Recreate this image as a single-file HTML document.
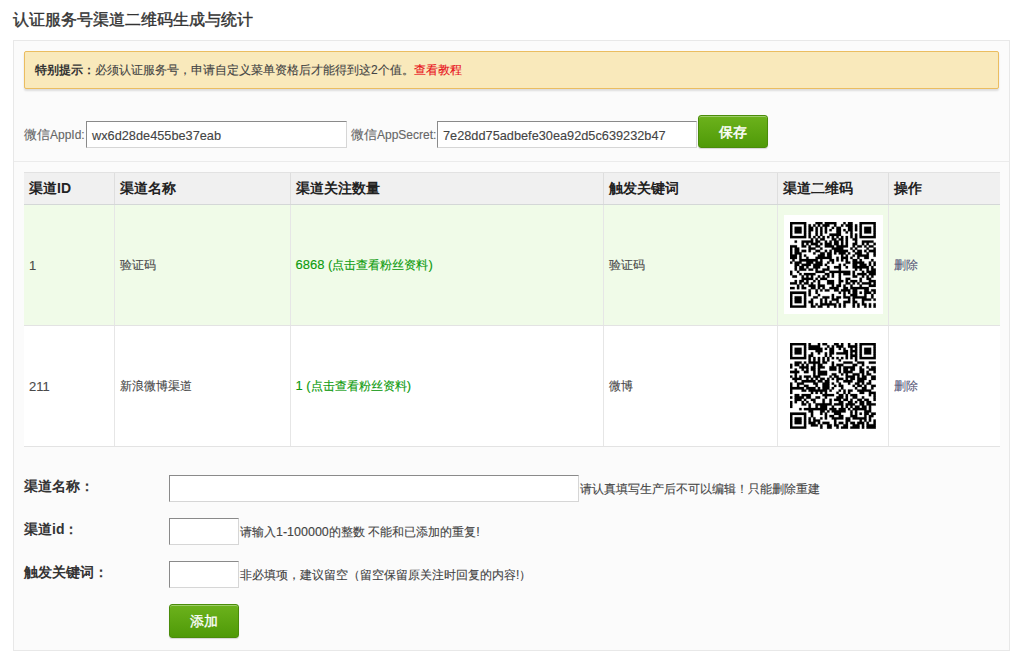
<!DOCTYPE html>
<html><head><meta charset="utf-8">
<style>
*{box-sizing:border-box;margin:0;padding:0}
html,body{width:1022px;height:662px;overflow:hidden;background:#fff}
body{font-family:"Liberation Sans",sans-serif;color:#444;position:relative;font-size:12px;-webkit-text-stroke-width:0.12px}
.abs{position:absolute;white-space:nowrap}
#title{left:13px;top:10px;font-size:16px;line-height:20px;color:#333;-webkit-text-stroke:0.4px #333}
#box{left:13px;top:40px;width:997px;height:611px;background:#fbfbfb;border:1px solid #e8e8e8}
#alert{left:24px;top:51px;width:975px;height:38px;background:#f9e9bb;border:1px solid #ebbd60;border-radius:2px;box-shadow:0 2px 2px rgba(0,0,0,.12);font-size:12px;line-height:36px;padding-left:10px;color:#444}
#alert b{color:#333;-webkit-text-stroke-width:0}
#alert .red{color:#e8101a}
.lbl{font-size:13px;color:#666;line-height:16px}
.lat{font-size:12px}
.inp{background:#fff;border:1px solid;border-color:#8a8a8a #d6d6d6 #d6d6d6 #8a8a8a;font-size:12.75px;color:#444;line-height:27px;padding-left:5px}
.btn{background:linear-gradient(#6cb21c,#4f9a08);border:1px solid #4a8c0a;border-radius:3px;color:#fff;font-size:14px;text-align:center;box-shadow:inset 0 1px 0 rgba(255,255,255,.35),0 1px 1px rgba(0,0,0,.15)}
#sep{left:14px;top:161px;width:995px;height:1px;background:#ebebeb}
table{position:absolute;left:24px;top:172px;width:976px;border-collapse:collapse;font-size:12px}
th{-webkit-text-stroke-width:0;height:32px;background:#f0f0f0;text-align:left;font-size:14px;color:#222;border-top:1px solid #e2e2e2;border-bottom:1px solid #d4d7d7;padding-left:5px}
td{padding-left:5px;color:#4a4a4a;border-left:1px solid #e6e6e6;border-bottom:1px solid #e3e3e3}
th{border-left:1px solid #dedede}
th:first-child,td:first-child{border-left:none}
tr.g td{background:#f0fbe8}
tr.w td{background:#fff}
.grn{color:#0c9a0c}
.n{font-size:13px}
.hl{font-size:12.5px}
.del{color:#58587a}
.qr{display:block;width:99px;height:99px}
.qs{position:absolute;fill:#000;stroke:#000;stroke-width:0.1}
.flab{font-size:14px;font-weight:bold;color:#333;line-height:16px;-webkit-text-stroke-width:0}
.hint{font-size:12px;color:#444;line-height:16px}
</style></head><body>
<div class="abs" id="title">认证服务号渠道二维码生成与统计</div>
<div class="abs" id="box"></div>
<div class="abs" id="alert"><b>特别提示：</b>必须认证服务号，申请自定义菜单资格后才能得到这2个值。<span class="red">查看教程</span></div>
<div class="abs lbl" style="left:24px;top:127px">微信<span class="lat">AppId:</span></div>
<div class="abs inp" style="left:86px;top:121px;width:261px;height:27px">wx6d28de455be37eab</div>
<div class="abs lbl" style="left:351px;top:127px">微信<span class="lat">AppSecret:</span></div>
<div class="abs inp" style="left:437px;top:121px;width:260px;height:27px">7e28dd75adbefe30ea92d5c639232b47</div>
<div class="abs btn" style="left:698px;top:115px;width:70px;height:33px;line-height:33px;-webkit-text-stroke:0.5px #fff">保存</div>
<div class="abs" id="sep"></div>
<table>
<tr><th style="width:90px">渠道ID</th><th style="width:176px">渠道名称</th><th style="width:313px">渠道关注数量</th><th style="width:174px">触发关键词</th><th style="width:111px">渠道二维码</th><th>操作</th></tr>
<tr class="g" style="height:121px"><td class="n">1</td><td>验证码</td><td class="grn"><span class="n">6868 (</span>点击查看粉丝资料<span class="n">)</span></td><td>验证码</td><td style="padding-left:6px"><div class="qr" id="qr1"></div></td><td class="del">删除</td></tr>
<tr class="w" style="height:121px"><td class="n">211</td><td>新浪微博渠道</td><td class="grn"><span class="n">1 (</span>点击查看粉丝资料<span class="n">)</span></td><td>微博</td><td style="padding-left:6px"><div class="qr" id="qr2"></div></td><td class="del">删除</td></tr>
</table>
<div class="abs" style="left:784px;top:215px;width:99px;height:99px;background:#fff"></div>
<svg class="qs" style="left:790px;top:222px" width="85.8" height="85.8" viewBox="0 0 37 37"><path d="M0 0h7v1h-7zM11 0h3v1h-3zM15 0h5v1h-5zM23 0h1v1h-1zM25 0h2v1h-2zM30 0h7v1h-7zM0 1h1v1h-1zM6 1h1v1h-1zM8 1h1v1h-1zM10 1h1v1h-1zM12 1h1v1h-1zM14 1h3v1h-3zM19 1h1v1h-1zM22 1h1v1h-1zM24 1h3v1h-3zM28 1h1v1h-1zM30 1h1v1h-1zM36 1h1v1h-1zM0 2h1v1h-1zM2 2h3v1h-3zM6 2h1v1h-1zM8 2h2v1h-2zM11 2h1v1h-1zM13 2h1v1h-1zM15 2h1v1h-1zM18 2h1v1h-1zM20 2h2v1h-2zM25 2h2v1h-2zM28 2h1v1h-1zM30 2h1v1h-1zM32 2h3v1h-3zM36 2h1v1h-1zM0 3h1v1h-1zM2 3h3v1h-3zM6 3h1v1h-1zM8 3h2v1h-2zM11 3h1v1h-1zM13 3h1v1h-1zM15 3h1v1h-1zM17 3h1v1h-1zM20 3h2v1h-2zM23 3h1v1h-1zM25 3h2v1h-2zM28 3h1v1h-1zM30 3h1v1h-1zM32 3h3v1h-3zM36 3h1v1h-1zM0 4h1v1h-1zM2 4h3v1h-3zM6 4h1v1h-1zM8 4h1v1h-1zM11 4h1v1h-1zM13 4h1v1h-1zM15 4h1v1h-1zM20 4h2v1h-2zM24 4h1v1h-1zM26 4h1v1h-1zM30 4h1v1h-1zM32 4h3v1h-3zM36 4h1v1h-1zM0 5h1v1h-1zM6 5h1v1h-1zM8 5h1v1h-1zM11 5h1v1h-1zM13 5h1v1h-1zM17 5h5v1h-5zM26 5h1v1h-1zM28 5h1v1h-1zM30 5h1v1h-1zM36 5h1v1h-1zM0 6h7v1h-7zM8 6h1v1h-1zM10 6h1v1h-1zM12 6h1v1h-1zM14 6h1v1h-1zM16 6h1v1h-1zM18 6h1v1h-1zM20 6h1v1h-1zM22 6h1v1h-1zM24 6h1v1h-1zM26 6h1v1h-1zM28 6h1v1h-1zM30 6h7v1h-7zM9 7h1v1h-1zM11 7h1v1h-1zM13 7h2v1h-2zM18 7h2v1h-2zM21 7h2v1h-2zM24 7h1v1h-1zM27 7h2v1h-2zM2 8h1v1h-1zM5 8h5v1h-5zM11 8h2v1h-2zM15 8h1v1h-1zM17 8h1v1h-1zM19 8h2v1h-2zM22 8h1v1h-1zM24 8h1v1h-1zM28 8h1v1h-1zM31 8h5v1h-5zM5 9h1v1h-1zM7 9h1v1h-1zM9 9h3v1h-3zM13 9h1v1h-1zM15 9h3v1h-3zM19 9h2v1h-2zM22 9h1v1h-1zM24 9h1v1h-1zM27 9h2v1h-2zM31 9h1v1h-1zM33 9h1v1h-1zM36 9h1v1h-1zM0 10h3v1h-3zM5 10h2v1h-2zM8 10h1v1h-1zM11 10h2v1h-2zM15 10h4v1h-4zM20 10h5v1h-5zM27 10h1v1h-1zM29 10h2v1h-2zM32 10h1v1h-1zM34 10h2v1h-2zM0 11h1v1h-1zM2 11h2v1h-2zM8 11h3v1h-3zM13 11h1v1h-1zM18 11h5v1h-5zM26 11h1v1h-1zM28 11h1v1h-1zM33 11h1v1h-1zM36 11h1v1h-1zM0 12h1v1h-1zM2 12h2v1h-2zM5 12h2v1h-2zM8 12h1v1h-1zM11 12h2v1h-2zM15 12h1v1h-1zM17 12h1v1h-1zM19 12h6v1h-6zM27 12h1v1h-1zM29 12h2v1h-2zM32 12h1v1h-1zM34 12h3v1h-3zM0 13h1v1h-1zM2 13h3v1h-3zM10 13h1v1h-1zM13 13h2v1h-2zM16 13h2v1h-2zM19 13h1v1h-1zM21 13h3v1h-3zM25 13h1v1h-1zM28 13h3v1h-3zM33 13h1v1h-1zM36 13h1v1h-1zM0 14h3v1h-3zM4 14h1v1h-1zM6 14h1v1h-1zM12 14h3v1h-3zM16 14h2v1h-2zM22 14h1v1h-1zM24 14h1v1h-1zM27 14h1v1h-1zM29 14h5v1h-5zM36 14h1v1h-1zM0 15h3v1h-3zM4 15h1v1h-1zM7 15h1v1h-1zM11 15h7v1h-7zM20 15h1v1h-1zM22 15h3v1h-3zM26 15h1v1h-1zM29 15h1v1h-1zM32 15h2v1h-2zM1 16h1v1h-1zM4 16h8v1h-8zM13 16h1v1h-1zM17 16h2v1h-2zM20 16h1v1h-1zM22 16h1v1h-1zM24 16h1v1h-1zM27 16h2v1h-2zM30 16h1v1h-1zM35 16h1v1h-1zM0 17h1v1h-1zM2 17h3v1h-3zM7 17h3v1h-3zM11 17h3v1h-3zM16 17h1v1h-1zM18 17h1v1h-1zM24 17h2v1h-2zM27 17h5v1h-5zM34 17h1v1h-1zM36 17h1v1h-1zM2 18h2v1h-2zM5 18h4v1h-4zM10 18h4v1h-4zM15 18h1v1h-1zM21 18h1v1h-1zM23 18h1v1h-1zM27 18h2v1h-2zM30 18h3v1h-3zM34 18h1v1h-1zM36 18h1v1h-1zM2 19h1v1h-1zM4 19h2v1h-2zM7 19h1v1h-1zM10 19h3v1h-3zM16 19h1v1h-1zM19 19h3v1h-3zM24 19h1v1h-1zM27 19h7v1h-7zM35 19h1v1h-1zM2 20h1v1h-1zM4 20h3v1h-3zM8 20h2v1h-2zM11 20h1v1h-1zM14 20h3v1h-3zM21 20h1v1h-1zM28 20h1v1h-1zM30 20h1v1h-1zM33 20h1v1h-1zM35 20h2v1h-2zM0 21h1v1h-1zM3 21h1v1h-1zM11 21h4v1h-4zM17 21h9v1h-9zM27 21h1v1h-1zM31 21h1v1h-1zM33 21h4v1h-4zM0 22h1v1h-1zM4 22h1v1h-1zM6 22h5v1h-5zM15 22h2v1h-2zM18 22h1v1h-1zM21 22h1v1h-1zM23 22h3v1h-3zM27 22h1v1h-1zM29 22h4v1h-4zM34 22h3v1h-3zM1 23h2v1h-2zM5 23h1v1h-1zM7 23h1v1h-1zM9 23h1v1h-1zM12 23h1v1h-1zM14 23h1v1h-1zM16 23h1v1h-1zM18 23h1v1h-1zM21 23h1v1h-1zM27 23h2v1h-2zM31 23h1v1h-1zM33 23h1v1h-1zM35 23h1v1h-1zM5 24h5v1h-5zM11 24h1v1h-1zM13 24h3v1h-3zM21 24h1v1h-1zM24 24h2v1h-2zM30 24h1v1h-1zM33 24h2v1h-2zM2 25h1v1h-1zM4 25h2v1h-2zM7 25h1v1h-1zM10 25h1v1h-1zM12 25h1v1h-1zM16 25h3v1h-3zM21 25h2v1h-2zM24 25h1v1h-1zM26 25h3v1h-3zM30 25h1v1h-1zM34 25h3v1h-3zM0 26h3v1h-3zM4 26h1v1h-1zM6 26h2v1h-2zM9 26h1v1h-1zM12 26h1v1h-1zM16 26h3v1h-3zM21 26h1v1h-1zM24 26h2v1h-2zM27 26h1v1h-1zM29 26h1v1h-1zM31 26h4v1h-4zM36 26h1v1h-1zM3 27h1v1h-1zM5 27h1v1h-1zM8 27h3v1h-3zM12 27h3v1h-3zM18 27h1v1h-1zM20 27h2v1h-2zM23 27h1v1h-1zM26 27h1v1h-1zM30 27h1v1h-1zM34 27h3v1h-3zM0 28h2v1h-2zM3 28h1v1h-1zM5 28h2v1h-2zM9 28h2v1h-2zM12 28h1v1h-1zM14 28h1v1h-1zM17 28h4v1h-4zM23 28h2v1h-2zM26 28h8v1h-8zM8 29h1v1h-1zM11 29h1v1h-1zM13 29h1v1h-1zM15 29h2v1h-2zM19 29h2v1h-2zM22 29h4v1h-4zM27 29h2v1h-2zM32 29h2v1h-2zM35 29h2v1h-2zM0 30h7v1h-7zM8 30h1v1h-1zM11 30h1v1h-1zM21 30h1v1h-1zM23 30h1v1h-1zM25 30h1v1h-1zM27 30h2v1h-2zM30 30h1v1h-1zM32 30h3v1h-3zM36 30h1v1h-1zM0 31h1v1h-1zM6 31h1v1h-1zM8 31h1v1h-1zM12 31h1v1h-1zM18 31h1v1h-1zM23 31h1v1h-1zM26 31h3v1h-3zM32 31h1v1h-1zM35 31h1v1h-1zM0 32h1v1h-1zM2 32h3v1h-3zM6 32h1v1h-1zM10 32h2v1h-2zM14 32h3v1h-3zM18 32h1v1h-1zM20 32h2v1h-2zM23 32h3v1h-3zM27 32h6v1h-6zM35 32h1v1h-1zM0 33h1v1h-1zM2 33h3v1h-3zM6 33h1v1h-1zM9 33h1v1h-1zM13 33h1v1h-1zM15 33h1v1h-1zM18 33h3v1h-3zM25 33h1v1h-1zM27 33h1v1h-1zM31 33h4v1h-4zM36 33h1v1h-1zM0 34h1v1h-1zM2 34h3v1h-3zM6 34h1v1h-1zM8 34h2v1h-2zM13 34h1v1h-1zM15 34h1v1h-1zM17 34h1v1h-1zM20 34h1v1h-1zM23 34h3v1h-3zM27 34h2v1h-2zM31 34h1v1h-1zM0 35h1v1h-1zM6 35h1v1h-1zM9 35h1v1h-1zM11 35h1v1h-1zM13 35h7v1h-7zM21 35h1v1h-1zM23 35h1v1h-1zM27 35h1v1h-1zM29 35h1v1h-1zM31 35h2v1h-2zM34 35h1v1h-1zM36 35h1v1h-1zM0 36h7v1h-7zM9 36h2v1h-2zM12 36h2v1h-2zM16 36h1v1h-1zM19 36h1v1h-1zM21 36h1v1h-1zM23 36h1v1h-1zM27 36h1v1h-1zM29 36h1v1h-1zM32 36h1v1h-1zM34 36h1v1h-1zM36 36h1v1h-1z"/></svg>
<svg class="qs" style="left:790px;top:343px" width="85.8" height="85.8" viewBox="0 0 37 37"><path d="M0 0h7v1h-7zM8 0h1v1h-1zM12 0h1v1h-1zM14 0h2v1h-2zM19 0h2v1h-2zM22 0h1v1h-1zM25 0h1v1h-1zM28 0h1v1h-1zM30 0h7v1h-7zM0 1h1v1h-1zM6 1h1v1h-1zM8 1h5v1h-5zM16 1h1v1h-1zM18 1h1v1h-1zM20 1h3v1h-3zM25 1h4v1h-4zM30 1h1v1h-1zM36 1h1v1h-1zM0 2h1v1h-1zM2 2h3v1h-3zM6 2h1v1h-1zM8 2h6v1h-6zM15 2h1v1h-1zM17 2h2v1h-2zM21 2h1v1h-1zM23 2h1v1h-1zM26 2h1v1h-1zM28 2h1v1h-1zM30 2h1v1h-1zM32 2h3v1h-3zM36 2h1v1h-1zM0 3h1v1h-1zM2 3h3v1h-3zM6 3h1v1h-1zM11 3h3v1h-3zM17 3h2v1h-2zM23 3h2v1h-2zM26 3h3v1h-3zM30 3h1v1h-1zM32 3h3v1h-3zM36 3h1v1h-1zM0 4h1v1h-1zM2 4h3v1h-3zM6 4h1v1h-1zM9 4h1v1h-1zM12 4h1v1h-1zM15 4h1v1h-1zM17 4h2v1h-2zM20 4h5v1h-5zM26 4h1v1h-1zM28 4h1v1h-1zM30 4h1v1h-1zM32 4h3v1h-3zM36 4h1v1h-1zM0 5h1v1h-1zM6 5h1v1h-1zM8 5h2v1h-2zM15 5h1v1h-1zM17 5h1v1h-1zM24 5h1v1h-1zM26 5h3v1h-3zM30 5h1v1h-1zM36 5h1v1h-1zM0 6h7v1h-7zM8 6h1v1h-1zM10 6h1v1h-1zM12 6h1v1h-1zM14 6h1v1h-1zM16 6h1v1h-1zM18 6h1v1h-1zM20 6h1v1h-1zM22 6h1v1h-1zM24 6h1v1h-1zM26 6h1v1h-1zM28 6h1v1h-1zM30 6h7v1h-7zM8 7h1v1h-1zM10 7h1v1h-1zM12 7h1v1h-1zM14 7h1v1h-1zM16 7h1v1h-1zM21 7h1v1h-1zM28 7h1v1h-1zM2 8h3v1h-3zM6 8h1v1h-1zM8 8h5v1h-5zM14 8h2v1h-2zM18 8h1v1h-1zM23 8h4v1h-4zM29 8h3v1h-3zM34 8h3v1h-3zM0 9h1v1h-1zM2 9h2v1h-2zM5 9h1v1h-1zM7 9h1v1h-1zM10 9h1v1h-1zM12 9h2v1h-2zM18 9h1v1h-1zM20 9h3v1h-3zM27 9h2v1h-2zM31 9h1v1h-1zM0 10h1v1h-1zM4 10h4v1h-4zM9 10h2v1h-2zM12 10h3v1h-3zM17 10h3v1h-3zM21 10h1v1h-1zM23 10h5v1h-5zM30 10h1v1h-1zM33 10h1v1h-1zM35 10h2v1h-2zM2 11h1v1h-1zM5 11h1v1h-1zM7 11h1v1h-1zM9 11h2v1h-2zM12 11h1v1h-1zM17 11h3v1h-3zM21 11h1v1h-1zM23 11h2v1h-2zM26 11h2v1h-2zM30 11h2v1h-2zM34 11h3v1h-3zM0 12h4v1h-4zM6 12h2v1h-2zM10 12h1v1h-1zM12 12h4v1h-4zM21 12h1v1h-1zM23 12h4v1h-4zM30 12h2v1h-2zM33 12h1v1h-1zM36 12h1v1h-1zM2 13h1v1h-1zM10 13h1v1h-1zM12 13h4v1h-4zM18 13h2v1h-2zM22 13h1v1h-1zM24 13h1v1h-1zM27 13h3v1h-3zM31 13h1v1h-1zM33 13h2v1h-2zM0 14h1v1h-1zM2 14h1v1h-1zM4 14h1v1h-1zM6 14h3v1h-3zM10 14h3v1h-3zM17 14h1v1h-1zM19 14h2v1h-2zM24 14h4v1h-4zM29 14h1v1h-1zM31 14h2v1h-2zM35 14h2v1h-2zM1 15h4v1h-4zM7 15h1v1h-1zM9 15h1v1h-1zM11 15h1v1h-1zM13 15h2v1h-2zM16 15h1v1h-1zM18 15h1v1h-1zM20 15h3v1h-3zM24 15h1v1h-1zM26 15h2v1h-2zM29 15h4v1h-4zM35 15h2v1h-2zM2 16h1v1h-1zM5 16h6v1h-6zM12 16h2v1h-2zM15 16h2v1h-2zM20 16h1v1h-1zM23 16h4v1h-4zM29 16h3v1h-3zM34 16h1v1h-1zM0 17h1v1h-1zM3 17h3v1h-3zM10 17h2v1h-2zM14 17h3v1h-3zM18 17h1v1h-1zM21 17h1v1h-1zM25 17h1v1h-1zM28 17h2v1h-2zM31 17h1v1h-1zM33 17h2v1h-2zM0 18h1v1h-1zM3 18h1v1h-1zM6 18h2v1h-2zM11 18h1v1h-1zM14 18h3v1h-3zM19 18h1v1h-1zM21 18h2v1h-2zM27 18h1v1h-1zM29 18h2v1h-2zM32 18h1v1h-1zM35 18h2v1h-2zM0 19h6v1h-6zM7 19h4v1h-4zM12 19h1v1h-1zM14 19h3v1h-3zM18 19h1v1h-1zM22 19h1v1h-1zM28 19h1v1h-1zM31 19h2v1h-2zM35 19h1v1h-1zM0 20h1v1h-1zM5 20h2v1h-2zM8 20h8v1h-8zM17 20h1v1h-1zM21 20h1v1h-1zM23 20h1v1h-1zM25 20h2v1h-2zM29 20h6v1h-6zM0 21h1v1h-1zM9 21h1v1h-1zM11 21h1v1h-1zM13 21h1v1h-1zM15 21h1v1h-1zM20 21h1v1h-1zM23 21h1v1h-1zM25 21h1v1h-1zM30 21h2v1h-2zM34 21h3v1h-3zM2 22h2v1h-2zM5 22h4v1h-4zM14 22h5v1h-5zM21 22h2v1h-2zM24 22h1v1h-1zM26 22h3v1h-3zM34 22h1v1h-1zM36 22h1v1h-1zM0 23h1v1h-1zM2 23h4v1h-4zM7 23h2v1h-2zM11 23h2v1h-2zM15 23h1v1h-1zM20 23h3v1h-3zM24 23h1v1h-1zM27 23h2v1h-2zM31 23h1v1h-1zM36 23h1v1h-1zM2 24h3v1h-3zM6 24h1v1h-1zM9 24h2v1h-2zM14 24h1v1h-1zM17 24h1v1h-1zM19 24h3v1h-3zM23 24h2v1h-2zM26 24h1v1h-1zM29 24h2v1h-2zM32 24h2v1h-2zM36 24h1v1h-1zM0 25h1v1h-1zM2 25h1v1h-1zM5 25h1v1h-1zM7 25h1v1h-1zM10 25h1v1h-1zM14 25h1v1h-1zM17 25h1v1h-1zM21 25h2v1h-2zM25 25h2v1h-2zM28 25h1v1h-1zM30 25h2v1h-2zM33 25h2v1h-2zM0 26h1v1h-1zM5 26h2v1h-2zM8 26h1v1h-1zM11 26h7v1h-7zM19 26h4v1h-4zM24 26h4v1h-4zM30 26h2v1h-2zM33 26h4v1h-4zM0 27h1v1h-1zM8 27h1v1h-1zM11 27h1v1h-1zM13 27h3v1h-3zM18 27h1v1h-1zM22 27h1v1h-1zM24 27h1v1h-1zM26 27h1v1h-1zM28 27h2v1h-2zM31 27h2v1h-2zM34 27h1v1h-1zM4 28h1v1h-1zM6 28h10v1h-10zM17 28h3v1h-3zM21 28h3v1h-3zM25 28h1v1h-1zM27 28h6v1h-6zM34 28h1v1h-1zM8 29h2v1h-2zM13 29h2v1h-2zM16 29h1v1h-1zM18 29h6v1h-6zM26 29h1v1h-1zM28 29h1v1h-1zM32 29h3v1h-3zM0 30h7v1h-7zM9 30h1v1h-1zM13 30h1v1h-1zM15 30h1v1h-1zM19 30h3v1h-3zM26 30h1v1h-1zM28 30h1v1h-1zM30 30h1v1h-1zM32 30h2v1h-2zM35 30h2v1h-2zM0 31h1v1h-1zM6 31h1v1h-1zM9 31h1v1h-1zM15 31h1v1h-1zM17 31h2v1h-2zM21 31h2v1h-2zM26 31h3v1h-3zM32 31h1v1h-1zM34 31h2v1h-2zM0 32h1v1h-1zM2 32h3v1h-3zM6 32h1v1h-1zM8 32h1v1h-1zM10 32h1v1h-1zM13 32h1v1h-1zM15 32h1v1h-1zM18 32h5v1h-5zM24 32h2v1h-2zM27 32h6v1h-6zM34 32h1v1h-1zM0 33h1v1h-1zM2 33h3v1h-3zM6 33h1v1h-1zM8 33h1v1h-1zM10 33h3v1h-3zM19 33h1v1h-1zM24 33h2v1h-2zM30 33h1v1h-1zM32 33h1v1h-1zM34 33h1v1h-1zM36 33h1v1h-1zM0 34h1v1h-1zM2 34h3v1h-3zM6 34h1v1h-1zM8 34h3v1h-3zM12 34h1v1h-1zM14 34h3v1h-3zM19 34h1v1h-1zM21 34h2v1h-2zM24 34h1v1h-1zM26 34h2v1h-2zM29 34h3v1h-3zM33 34h1v1h-1zM36 34h1v1h-1zM0 35h1v1h-1zM6 35h1v1h-1zM9 35h3v1h-3zM13 35h1v1h-1zM16 35h2v1h-2zM19 35h2v1h-2zM23 35h2v1h-2zM27 35h3v1h-3zM31 35h1v1h-1zM33 35h4v1h-4zM0 36h7v1h-7zM13 36h1v1h-1zM16 36h2v1h-2zM20 36h1v1h-1zM22 36h3v1h-3zM26 36h4v1h-4zM31 36h1v1h-1zM33 36h4v1h-4z"/></svg>
<div class="abs flab" style="left:24px;top:478px">渠道名称：</div>
<div class="abs inp" style="left:169px;top:475px;width:410px;height:27px"></div>
<div class="abs hint" style="left:580px;top:481px">请认真填写生产后不可以编辑！只能删除重建</div>
<div class="abs flab" style="left:24px;top:521px">渠道id：</div>
<div class="abs inp" style="left:169px;top:518px;width:70px;height:27px"></div>
<div class="abs hint" style="left:240px;top:524px">请输入<span class="hl">1-100000</span>的整数<span class="hl"> </span>不能和已添加的重复<span class="hl">!</span></div>
<div class="abs flab" style="left:24px;top:564px">触发关键词：</div>
<div class="abs inp" style="left:169px;top:561px;width:70px;height:27px"></div>
<div class="abs hint" style="left:240px;top:567px">非必填项，建议留空（留空保留原关注时回复的内容!）</div>
<div class="abs btn" style="left:169px;top:604px;width:70px;height:34px;line-height:32px;-webkit-text-stroke:0.3px #fff">添加</div>
</body></html>
